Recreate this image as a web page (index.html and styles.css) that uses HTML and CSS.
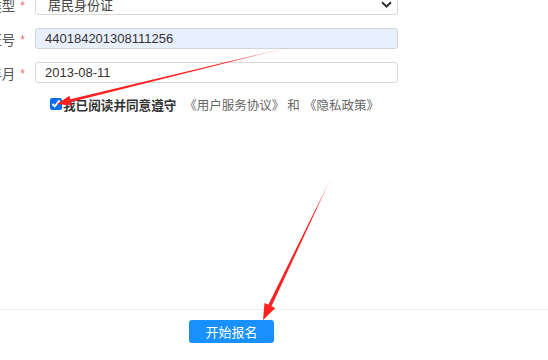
FILE: index.html
```html
<!DOCTYPE html>
<html lang="zh">
<head>
<meta charset="utf-8">
<link rel="stylesheet" href="styles.css">
</head>
<body>
<div class="page">
  <main class="form">
    <div class="row">
      <label class="label"><span class="label-text">证件类型</span><span class="req">*</span></label>
      <div class="field select">
        <span class="value sel-value">居民身份证</span>
        <svg class="chev" width="11" height="7" viewBox="0 0 11 7"><path d="M1 1.2 L5.5 5.5 L10 1.2" fill="none" stroke="#333" stroke-width="2"/></svg>
      </div>
    </div>
    <div class="row">
      <label class="label"><span class="label-text">身份证号</span><span class="req">*</span></label>
      <div class="field autofill"><span class="value">440184201308111256</span></div>
    </div>
    <div class="row">
      <label class="label"><span class="label-text">出生年月</span><span class="req">*</span></label>
      <div class="field"><span class="value">2013-08-11</span></div>
    </div>
    <div class="agree">
      <input type="checkbox" class="check" checked>
      <span class="agree-main">我已阅读并同意遵守</span>
      <span class="agree-links">《用户服务协议》<span class="and">和</span>《隐私政策》</span>
    </div>
  </main>
  <footer class="footer">
    <button class="btn">开始报名</button>
  </footer>
  <svg class="arrows" width="548" height="360" viewBox="0 0 548 360">
    <defs>
      <linearGradient id="g1" gradientUnits="userSpaceOnUse" x1="298" y1="45" x2="57" y2="104">
        <stop offset="0" stop-color="#ff2020" stop-opacity="0.15"/>
        <stop offset="0.3" stop-color="#ff2020" stop-opacity="1"/>
        <stop offset="1" stop-color="#ff2020"/>
      </linearGradient>
      <linearGradient id="g2" gradientUnits="userSpaceOnUse" x1="332" y1="176" x2="263" y2="320">
        <stop offset="0" stop-color="#ff2020" stop-opacity="0.15"/>
        <stop offset="0.25" stop-color="#ff2020" stop-opacity="1"/>
        <stop offset="1" stop-color="#ff2020"/>
      </linearGradient>
    </defs>
    <polygon fill="url(#g1)" points="298,45 70.96,102.1 71.79,105.5 57,104 69.41,95.81 70.24,99.2"/>
    <polygon fill="url(#g2)" points="332,176 271.5,306.3 275.3,308.1 263,320 264.5,303.0 268.3,304.8"/>
  </svg>
</div>
</body>
</html>
```
FILE: styles.css
```css
* { box-sizing: border-box; }
html, body { margin: 0; padding: 0; background: #fff; }
body {
  font-family: "Liberation Sans", "Noto Sans CJK SC", sans-serif;
  color: #333;
  overflow: hidden;
}
.page {
  position: relative;
  width: 548px;
  height: 360px;
  display: flex;
  flex-direction: column;
}
.form {
  flex: 1;
  margin-top: -6px;
  display: flex;
  flex-direction: column;
  gap: 13px;
}
.row {
  display: flex;
  align-items: center;
  height: 21px;
}
.label {
  width: 35px;
  flex: none;
  display: flex;
  justify-content: flex-end;
  align-items: center;
  padding-right: 10px;
  white-space: nowrap;
  font-size: 13.5px;
  color: #555;
}
.req {
  color: #f56c6c;
  font-size: 12px;
  margin-left: 5px;
  position: relative;
  top: 1px;
}
.field {
  width: 363px;
  height: 21px;
  border: 1px solid #d9d9d9;
  border-radius: 3px;
  background: #fff;
  display: flex;
  align-items: center;
  padding-left: 9px;
  font-size: 13px;
  color: #333;
}
.autofill {
  background: #e8f0fe;
  border-color: #cfd5de;
}
.select {
  padding-left: 12px;
  padding-right: 4px;
  justify-content: space-between;
}
.sel-value { color: #444; }
.chev { margin-right: 1px; }
.agree {
  display: flex;
  align-items: center;
  height: 16px;
  margin-left: 50px;
}
.check {
  margin: 0 1px 0 0;
  width: 12px;
  height: 12px;
  accent-color: #0a6cf0;
}
.agree-main {
  font-size: 12.6px;
  font-weight: bold;
  color: #333;
  margin-right: 8px;
}
.agree-links {
  font-size: 12.5px;
  color: #666;
  white-space: nowrap;
}
.and {
  margin: 0 4px 0 3px;
}
.footer {
  height: 51px;
  flex: none;
  border-top: 1px solid #efefef;
  padding-top: 10px;
  padding-left: 189px;
}
.btn {
  display: block;
  width: 85px;
  height: 23px;
  border: none;
  border-radius: 3px;
  background: #1890ff;
  color: #fff;
  font-family: "Noto Sans CJK SC", sans-serif;
  font-size: 13px;
  padding: 0;
}
.arrows {
  position: absolute;
  left: 0;
  top: 0;
  pointer-events: none;
}
```
